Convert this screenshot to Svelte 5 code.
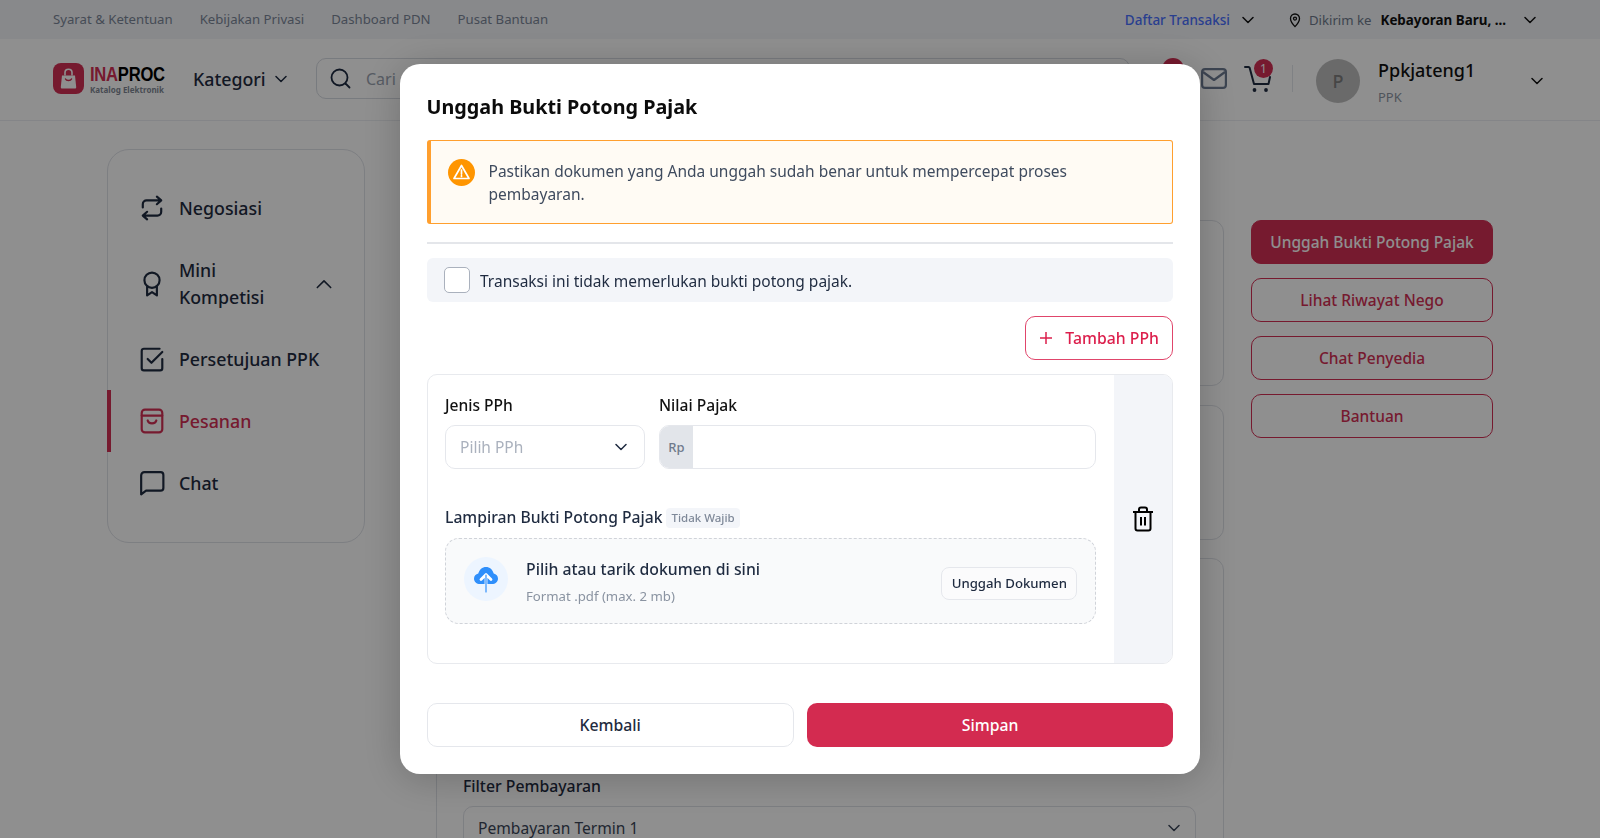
<script>
	const topLinks = ['Syarat & Ketentuan', 'Kebijakan Privasi', 'Dashboard PDN', 'Pusat Bantuan'];
	const sideButtons = ['Lihat Riwayat Nego', 'Chat Penyedia', 'Bantuan'];
</script>

<div class="page">
	<div class="topbar">
		<div class="top-links">
			{#each topLinks as link}
				<span>{link}</span>
			{/each}
		</div>
		<div class="top-right">
			<span class="tx">Daftar Transaksi</span>
			<svg class="chev tx-chev" viewBox="0 0 12 8"><path d="M1 1.500l5 5 5-5" /></svg>
			<svg class="pin" viewBox="0 0 12 15" fill="none" stroke="#111" stroke-width="1.300">
				<path d="M6 1C3.400 1 1.500 3 1.500 5.600 1.500 8.600 4.400 12 6 13.600 7.600 12 10.500 8.600 10.500 5.600 10.500 3 8.600 1 6 1z" />
				<circle cx="6" cy="5.600" r="1.500" />
			</svg>
			<span class="sent">Dikirim ke</span>
			<b class="place">Kebayoran Baru, ...</b>
			<svg class="chev" viewBox="0 0 12 8"><path d="M1 1.500l5 5 5-5" /></svg>
		</div>
	</div>

	<header class="header">
		<div class="logo">
			<svg width="31" height="31" viewBox="0 0 31 31">
				<rect width="31" height="31" rx="8" fill="#d32f54" />
				<path d="M9 12.500h13l1.200 11.500c.1 1-.5 1.600-1.400 1.600H9.200c-.9 0-1.500-.6-1.400-1.600z" fill="#fff" />
				<path d="M12 12.500V9.500c0-2 1.500-3.300 3.500-3.300s3.500 1.300 3.500 3.300v3" fill="none" stroke="#fff" stroke-width="1.600" />
				<path d="M12.500 16c.8 2 5.200 2 6 0" fill="none" stroke="#d32f54" stroke-width="1.400" stroke-linecap="round" />
			</svg>
			<div class="logo-text">
				<div class="logo-name"><span>INA</span>PROC</div>
				<div class="logo-sub">Katalog Elektronik</div>
			</div>
		</div>
		<div class="kategori">
			Kategori
			<svg class="chev" viewBox="0 0 12 8"><path d="M1 1.500l5 5 5-5" /></svg>
		</div>
		<div class="search">
			<svg width="21" height="21" viewBox="0 0 21 21" fill="none" stroke="#1d2a40" stroke-width="1.800">
				<circle cx="9.500" cy="9.500" r="8" />
				<path d="M15.500 15.500l4 4" stroke-linecap="round" />
			</svg>
			<span>Cari</span>
		</div>
		<div class="bell-badge"></div>
		<svg class="mail" width="26" height="21" viewBox="0 0 26 21" fill="none" stroke="#6c7a91" stroke-width="2.200">
			<rect x="1.100" y="1.100" width="23.800" height="18.800" rx="3" />
			<path d="M2 4l11 8 11-8" stroke-linejoin="round" />
		</svg>
		<div class="cart">
			<svg width="28" height="28" viewBox="0 0 28 28" fill="none" stroke="#1f2b40" stroke-width="2">
				<path d="M1 2h3.500c.6 0 1 .3 1.200.9L10 19h14.500l1.500-7" stroke-linecap="round" stroke-linejoin="round" />
				<circle cx="10.500" cy="25" r="1.900" fill="#1f2b40" stroke="none" />
				<circle cx="22" cy="25" r="1.900" fill="#1f2b40" stroke="none" />
			</svg>
			<span class="cart-badge">1</span>
		</div>
		<div class="vline"></div>
		<div class="avatar">P</div>
		<div class="who">
			<div class="who-name">Ppkjateng1</div>
			<div class="who-role">PPK</div>
		</div>
		<svg class="chev who-chev" viewBox="0 0 12 8"><path d="M1 1.500l5 5 5-5" /></svg>
	</header>

	<div class="body">
		<aside class="sidebar">
			<div class="nav-item">
				<svg viewBox="0 0 24 24"><path d="M16.500 1.500L20.500 5l-4 3.500M20 5H7C5 5 3.500 6.500 3.500 8.500V11.500M7.500 22.500L3.500 19l4-3.500M4 19h13c2 0 3.500-1.500 3.500-3.500V12.500" /></svg>
				<span>Negosiasi</span>
			</div>
			<div class="nav-item tall">
				<svg viewBox="0 0 24 24"><circle cx="12" cy="8.500" r="7" /><path d="M7.500 14v8.500l4.500-3 4.500 3V14" /></svg>
				<span class="mini">Mini Kompetisi</span>
				<svg class="nav-chev" viewBox="0 0 18 11"><path d="M1.500 9.500L9 2l7.500 7.500" /></svg>
			</div>
			<div class="nav-item">
				<svg viewBox="0 0 24 24"><path d="M19 2.500H4.500a2 2 0 0 0-2 2v16a2 2 0 0 0 2 2h15a2 2 0 0 0 2-2V12" /><path d="M8 12l3.500 3.500L21.500 5.500" /></svg>
				<span>Persetujuan PPK</span>
			</div>
			<div class="nav-item active">
				<svg viewBox="0 0 24 24"><rect x="2.500" y="1.500" width="19" height="21" rx="3" /><path d="M2.500 7h19M8 11.500c.8 3.500 7.200 3.500 8 0" /></svg>
				<span>Pesanan</span>
			</div>
			<div class="nav-item">
				<svg viewBox="0 0 24 24"><path d="M2 22.500V5a3 3 0 0 1 3-3h15a2.500 2.500 0 0 1 2.500 2.500v12a2.500 2.500 0 0 1-2.500 2.500H6.500z" /></svg>
				<span>Chat</span>
			</div>
		</aside>

		<main class="content">
			<div class="panel p1"></div>
			<div class="panel p2"></div>
			<div class="panel p3">
				<div class="filter-label">Filter Pembayaran</div>
				<div class="filter-select">
					Pembayaran Termin 1
					<svg class="chev" viewBox="0 0 12 8"><path d="M1 1.500l5 5 5-5" /></svg>
				</div>
			</div>
		</main>

		<div class="side-actions">
			<button class="act primary">Unggah Bukti Potong Pajak</button>
			{#each sideButtons as label}
				<button class="act">{label}</button>
			{/each}
		</div>
	</div>
</div>

<div class="backdrop">
	<div class="modal">
		<h2>Unggah Bukti Potong Pajak</h2>

		<div class="alert">
			<svg width="27" height="27" viewBox="0 0 27 27">
				<circle cx="13.500" cy="13.500" r="13.500" fill="#ff9500" />
				<path d="M13.500 6.500L21 19.500H6z" fill="none" stroke="#fff" stroke-width="1.700" stroke-linejoin="round" />
				<path d="M13.500 11v4M13.500 16.700v.8" stroke="#fff" stroke-width="1.700" stroke-linecap="round" />
			</svg>
			<p>Pastikan dokumen yang Anda unggah sudah benar untuk mempercepat proses pembayaran.</p>
		</div>

		<div class="divider"></div>

		<div class="no-need">
			<span class="checkbox"></span>
			<span>Transaksi ini tidak memerlukan bukti potong pajak.</span>
		</div>

		<div class="add-row">
			<button class="add">
				<svg width="14" height="14" viewBox="0 0 14 14" stroke="currentColor" stroke-width="1.500"><path d="M7 1v12M1 7h12" /></svg>
				Tambah PPh
			</button>
		</div>

		<div class="pph-card">
			<div class="pph-form">
				<div class="fields">
					<div>
						<div class="label">Jenis PPh</div>
						<div class="select">
							<span>Pilih PPh</span>
							<svg class="chev" viewBox="0 0 12 8"><path d="M1 1.500l5 5 5-5" /></svg>
						</div>
					</div>
					<div>
						<div class="label">Nilai Pajak</div>
						<div class="money"><span class="rp">Rp</span></div>
					</div>
				</div>

				<div class="attach-label">
					<span>Lampiran Bukti Potong Pajak</span>
					<span class="tag">Tidak Wajib</span>
				</div>
				<div class="drop">
					<div class="cloud">
						<svg width="28" height="28" viewBox="0 0 28 28">
							<path d="M8 19c-3.300 0-6-2.300-6-5.300 0-2.500 1.800-4.600 4.300-5.100C7.300 4.600 10.300 2 14 2s6.800 2.600 7.700 6.600c2.500.5 4.300 2.600 4.300 5.100 0 3-2.700 5.300-6 5.300z" fill="#2f8ffb" />
							<path d="M14 19V10M9 14.500l5-5 5 5" fill="none" stroke="#fff" stroke-width="2.800" stroke-linecap="round" stroke-linejoin="round" />
							<path d="M14 27V10" fill="none" stroke="#2f8ffb" stroke-width="1.200" stroke-linecap="round" />
						</svg>
					</div>
					<div class="drop-text">
						<div class="drop-title">Pilih atau tarik dokumen di sini</div>
						<div class="drop-sub">Format .pdf (max. 2 mb)</div>
					</div>
					<button class="upload">Unggah Dokumen</button>
				</div>
			</div>
			<div class="pph-side">
				<svg width="22" height="26" viewBox="0 0 22 26" fill="none" stroke="#000" stroke-width="2">
					<path d="M1 6h20M7 6V3.500C7 2.300 8 1.500 9 1.500h4c1 0 2 .8 2 2V6" />
					<path d="M3.500 6v16.500c0 1.100.9 2 2 2h11c1.100 0 2-.9 2-2V6" />
					<path d="M9 11v8.500M13 11v8.500" />
				</svg>
			</div>
		</div>

		<div class="footer">
			<button class="back">Kembali</button>
			<button class="save">Simpan</button>
		</div>
	</div>
</div>

<style>
	:global(body) {
		margin: 0;
		overflow: hidden;
		font-family: 'Noto Sans', 'Open Sans', sans-serif;
	}

	.page {
		height: 838px;
		overflow: hidden;
		background: #fff;
		color: #1f2b40;
	}

	/* top strip */
	.topbar {
		display: flex;
		align-items: center;
		justify-content: space-between;
		height: 39px;
		padding: 0 53px;
		background: #f2f4f8;
		font-size: 13.200px;
	}

	.top-links {
		display: flex;
		gap: 27px;
		margin-top: -2px;
		color: #7c8798;
	}

	.top-right {
		display: flex;
		align-items: center;
		margin: 1px 11px 0 0;
		color: #111;
	}

	.tx {
		color: #4a70ff;
		font-size: 13.500px;
		font-weight: 500;
	}

	.tx-chev {
		margin: 0 0 0 12px;
		stroke: #4a70ff;
	}

	.pin {
		width: 12px;
		height: 15px;
		margin: 0 8px 0 35px;
	}

	.sent {
		color: #6f7a8c;
		margin-right: 9px;
	}

	.place {
		font-size: 13.400px;
		font-weight: 700;
		margin-right: 18px;
	}

	.chev {
		width: 12px;
		height: 8px;
		fill: none;
		stroke: currentColor;
		stroke-width: 1.500;
		stroke-linecap: round;
		stroke-linejoin: round;
		flex: none;
	}

	/* main header */
	.header {
		display: flex;
		align-items: center;
		height: 82px;
		padding: 0 57px 2px 53px;
		border-bottom: 1px solid #eceef2;
		box-sizing: border-box;
	}

	.logo {
		display: flex;
		align-items: center;
		gap: 6px;
		width: 140px;
		flex: none;
	}

	.logo-name {
		font: 700 20px/22px 'Liberation Sans', sans-serif;
		color: #000;
		transform: scaleX(0.83);
		transform-origin: left;
		white-space: nowrap;
		letter-spacing: -0.3px;
	}

	.logo-name span {
		color: #d32f54;
	}

	.logo-sub {
		font-size: 8px;
		font-weight: 700;
		line-height: 10px;
		color: #7f8794;
		white-space: nowrap;
	}

	.kategori {
		display: flex;
		align-items: center;
		gap: 9px;
		width: 123px;
		flex: none;
		font-size: 17.800px;
		font-weight: 500;
	}

	.search {
		display: flex;
		align-items: center;
		gap: 15px;
		width: 814px;
		height: 41px;
		padding-left: 13px;
		box-sizing: border-box;
		border: 1px solid #d7dbe2;
		border-radius: 10px;
		flex: none;
		font-size: 16px;
		color: #9aa3b1;
	}

	.bell-badge {
		width: 22px;
		height: 22px;
		margin: -20px 0 0 32px;
		border-radius: 50%;
		background: #d32f54;
		flex: none;
	}

	.mail {
		margin-left: 17px;
		flex: none;
	}

	.cart {
		position: relative;
		width: 28px;
		height: 28px;
		margin-left: 17px;
		flex: none;
	}

	.cart-badge {
		position: absolute;
		top: -6px;
		left: 10px;
		width: 19px;
		height: 19px;
		border-radius: 50%;
		background: #d32f54;
		color: #fff;
		font-size: 12px;
		line-height: 19px;
		text-align: center;
	}

	.vline {
		width: 1px;
		height: 27px;
		margin-left: 20px;
		background: #e3e6eb;
		flex: none;
	}

	.avatar {
		display: flex;
		align-items: center;
		justify-content: center;
		width: 44px;
		height: 44px;
		margin: 4px 0 0 23px;
		border-radius: 50%;
		background: #bdbdbd;
		color: #7d7d7d;
		font-size: 18px;
		font-weight: 500;
		flex: none;
	}

	.who {
		margin-left: 18px;
		padding-top: 7px;
		flex: 1;
	}

	.who-name {
		font-size: 18px;
		font-weight: 500;
		line-height: 24px;
		color: #111;
	}

	.who-role {
		margin-top: 6px;
		font-size: 13px;
		line-height: 18px;
		color: #8e96a3;
	}

	.who-chev {
		margin-top: 4px;
		color: #111;
	}

	/* page body */
	.body {
		display: flex;
		padding: 28px 0 0 107px;
	}

	.sidebar {
		width: 258px;
		height: 394px;
		padding: 27px 0;
		box-sizing: border-box;
		border: 1px solid #dfe2e8;
		border-radius: 22px;
		flex: none;
	}

	.nav-item {
		position: relative;
		display: flex;
		align-items: center;
		gap: 14px;
		height: 62px;
		padding-left: 31px;
		font-size: 17.800px;
		font-weight: 500;
		color: #1f2b40;
	}

	.nav-item.tall {
		height: 89px;
	}

	.nav-item svg {
		width: 26px;
		height: 26px;
		flex: none;
		fill: none;
		stroke: currentColor;
		stroke-width: 2;
		stroke-linecap: round;
		stroke-linejoin: round;
	}

	.nav-item .mini {
		width: 110px;
		line-height: 27px;
	}

	.nav-item .nav-chev {
		width: 16px;
		height: 10px;
		margin-left: 13px;
		stroke-width: 1.800;
	}

	.nav-item.active {
		color: #d32f54;
	}

	.nav-item.active::before {
		content: '';
		position: absolute;
		top: 0;
		bottom: 0;
		left: -1px;
		width: 4px;
		background: #d32f54;
	}

	.content {
		width: 788px;
		margin: 71px 0 0 71px;
		flex: none;
	}

	.panel {
		box-sizing: border-box;
		border: 1px solid #dfe2e8;
		border-radius: 12px;
	}

	.p1 {
		height: 166px;
		margin-bottom: 19px;
	}

	.p2 {
		height: 135px;
		margin-bottom: 18px;
	}

	.p3 {
		height: 400px;
		padding: 215px 27px 0 26px;
	}

	.filter-label {
		font-size: 15.800px;
		font-weight: 500;
		line-height: 24px;
		margin-bottom: 8px;
	}

	.filter-select {
		display: flex;
		align-items: center;
		justify-content: space-between;
		height: 44px;
		padding: 0 15px 0 14px;
		box-sizing: border-box;
		border: 1px solid #dfe2e8;
		border-radius: 10px;
		font-size: 15.600px;
		color: #3b4658;
	}

	.side-actions {
		display: flex;
		flex-direction: column;
		gap: 14px;
		width: 242px;
		margin: 71px 0 0 27px;
		flex: none;
	}

	.act {
		height: 44px;
		padding: 0;
		box-sizing: border-box;
		border: 1px solid #d32f54;
		border-radius: 10px;
		background: #fff;
		color: #d32f54;
		font: 500 15.500px 'Noto Sans', sans-serif;
	}

	.act.primary {
		background: #d32f54;
		color: #fff;
	}

	/* modal */
	.backdrop {
		position: fixed;
		inset: 0;
		display: flex;
		align-items: center;
		justify-content: center;
		background: rgba(0, 0, 0, 0.44);
	}

	.modal {
		width: 800px;
		height: 710px;
		padding: 28px 26.700px 27px 26.500px;
		box-sizing: border-box;
		border-radius: 20px;
		background: #fff;
		color: #1f2b40;
		box-shadow: 0 4px 40px rgba(0, 0, 0, 0.22);
	}

	h2 {
		margin: 0 0 18px;
		font-size: 19.800px;
		font-weight: 700;
		line-height: 30px;
		color: #0b0b0b;
	}

	.alert {
		display: flex;
		gap: 14px;
		height: 84px;
		padding: 18px 40px 0 17px;
		box-sizing: border-box;
		border: 1px solid #ff9f2e;
		border-left-width: 4px;
		border-radius: 3px;
		background: #fffbf4;
	}

	.alert svg {
		flex: none;
	}

	.alert p {
		margin: 1px 0 0;
		font-size: 15.500px;
		line-height: 23px;
		color: #3f4b5e;
	}

	.divider {
		height: 2px;
		margin: 18px 0 14px;
		background: #e4e6ea;
	}

	.no-need {
		display: flex;
		align-items: center;
		gap: 10px;
		height: 44px;
		padding-left: 17.500px;
		border-radius: 6px;
		background: #f3f5f9;
		font-size: 15.500px;
	}

	.no-need span:last-child {
		margin-top: 2px;
	}

	.checkbox {
		width: 26px;
		height: 26px;
		box-sizing: border-box;
		border: 1.500px solid #aab1bd;
		border-radius: 5px;
		background: #fff;
		flex: none;
	}

	.add-row {
		display: flex;
		justify-content: flex-end;
		margin: 14px 0;
	}

	.add {
		display: flex;
		align-items: center;
		gap: 12px;
		width: 148px;
		height: 44px;
		padding: 0 0 0 13px;
		box-sizing: border-box;
		border: 1px solid #e0456b;
		border-radius: 10px;
		background: #fff;
		color: #dc1f4c;
		font: 500 15.800px 'Noto Sans', sans-serif;
	}

	.pph-card {
		display: flex;
		height: 290px;
		box-sizing: border-box;
		border: 1px solid #e8eaee;
		border-radius: 10px;
		overflow: hidden;
	}

	.pph-form {
		flex: 1;
		padding: 19px 18px 0 17.500px;
	}

	.fields {
		display: grid;
		grid-template-columns: 200px 1fr;
		gap: 14px;
	}

	.label {
		margin-bottom: 9px;
		font-size: 15.600px;
		font-weight: 500;
		line-height: 22px;
		color: #111;
	}

	.select {
		display: flex;
		align-items: center;
		justify-content: space-between;
		height: 44px;
		padding: 0 17px 0 14px;
		box-sizing: border-box;
		border: 1px solid #e5e7ec;
		border-radius: 10px;
		font-size: 15.500px;
		color: #aab1bd;
	}

	.select svg {
		color: #1f2b40;
	}

	.money {
		display: flex;
		height: 44px;
		box-sizing: border-box;
		border: 1px solid #e5e7ec;
		border-radius: 10px;
		overflow: hidden;
	}

	.rp {
		display: flex;
		align-items: center;
		justify-content: center;
		width: 33px;
		background: #e2e5ea;
		color: #6f7a8c;
		font-size: 13px;
		font-weight: 500;
	}

	.attach-label {
		display: flex;
		align-items: center;
		gap: 4px;
		height: 22px;
		margin: 37px 0 10px;
		font-size: 15.700px;
		font-weight: 500;
	}

	.tag {
		margin-top: 2px;
		padding: 0 5px;
		border-radius: 4px;
		background: #f3f5f9;
		color: #7e8898;
		font-size: 11.500px;
		font-weight: 500;
		line-height: 20px;
	}

	.drop {
		display: flex;
		align-items: center;
		height: 86px;
		padding: 0 18px;
		box-sizing: border-box;
		border: 1.500px dashed #d0d3d9;
		border-radius: 14px;
		background: #f9fafb;
	}

	.cloud {
		display: flex;
		align-items: center;
		justify-content: center;
		width: 44px;
		height: 44px;
		margin-top: -5px;
		border-radius: 50%;
		background: #edf5ff;
		flex: none;
	}

	.drop-text {
		flex: 1;
		margin-left: 18px;
	}

	.drop-title {
		font-size: 15.800px;
		font-weight: 500;
		line-height: 22px;
	}

	.drop-sub {
		margin-top: 7px;
		font-size: 13.200px;
		line-height: 18px;
		color: #8a93a1;
	}

	.upload {
		width: 136px;
		height: 33px;
		margin-top: 4px;
		padding: 0;
		border: 1px solid #e5e7ec;
		border-radius: 8px;
		background: #fbfbfc;
		color: #1f2b40;
		font: 500 13.200px 'Noto Sans', sans-serif;
	}

	.pph-side {
		display: flex;
		align-items: center;
		justify-content: center;
		width: 58px;
		background: #f3f5f9;
		flex: none;
	}

	.footer {
		display: grid;
		grid-template-columns: 367fr 366fr;
		gap: 13px;
		margin-top: 39px;
	}

	.footer button {
		height: 44px;
		padding: 0;
		box-sizing: border-box;
		border-radius: 10px;
		font: 500 15.800px 'Noto Sans', sans-serif;
	}

	.back {
		border: 1px solid #e5e7ec;
		background: #fff;
		color: #1f2b40;
	}

	.save {
		border: 0;
		background: #d32b50;
		color: #fff;
	}
</style>
